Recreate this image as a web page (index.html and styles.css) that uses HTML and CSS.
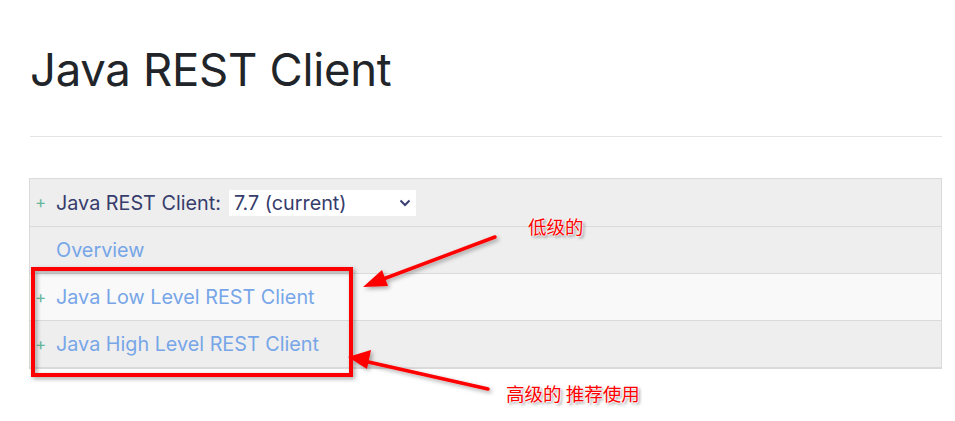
FILE: index.html
```html
<!DOCTYPE html>
<html lang="zh">
<head>
<meta charset="utf-8">
<title>Java REST Client</title>
<link rel="stylesheet" href="styles.css">
</head>
<body>
<main class="page">
  <h1 class="title">Java REST Client</h1>
  <hr class="rule">
  <div class="toc">
    <div class="row row-head">
      <span class="plus">+</span>
      <span class="label">Java REST Client:</span>
      <span class="select"><span class="select-text">7.7 (current)</span>
        <svg class="chev" width="12" height="8" viewBox="0 0 12 8"><path d="M1.5 1.5 L6 6 L10.5 1.5" fill="none" stroke="#3a4170" stroke-width="2"/></svg>
      </span>
    </div>
    <div class="row">
      <span class="plus hidden">+</span>
      <a class="link">Overview</a>
    </div>
    <div class="row row-light">
      <span class="plus">+</span>
      <a class="link">Java Low Level REST Client</a>
    </div>
    <div class="row">
      <span class="plus">+</span>
      <a class="link">Java High Level REST Client</a>
    </div>
  </div>
</main>
<svg class="annot" width="955" height="421" viewBox="0 0 955 421">
  <defs>
    <filter id="sh" x="-20%" y="-20%" width="140%" height="140%">
      <feDropShadow dx="2" dy="2" stdDeviation="2" flood-color="#000" flood-opacity="0.35"/>
    </filter>
  </defs>
  <g filter="url(#sh)">
    <rect x="33" y="269" width="318" height="106" fill="none" stroke="#ff0000" stroke-width="4"/>
    <line x1="495" y1="237" x2="378" y2="281" stroke="#ff0000" stroke-width="3.5" stroke-linecap="round"/>
    <polygon points="363,287 382,270 388,286" fill="#ff0000"/>
    <line x1="488" y1="389" x2="364" y2="361" stroke="#ff0000" stroke-width="3.5" stroke-linecap="round"/>
    <polygon points="348,357 371,350 367,369" fill="#ff0000"/>
  </g>
</svg>
<div class="note note-low">低级的</div>
<div class="note note-high">高级的 推荐使用</div>
</body>
</html>
```
FILE: styles.css
```css
html, body {
  margin: 0;
  padding: 0;
  background: #ffffff;
}
body {
  font-family: Inter, "Noto Sans", sans-serif;
  position: relative;
  width: 955px;
  height: 421px;
  overflow: hidden;
}
.page {
  padding: 0 13px 0 30px;
}
.title {
  margin: 0;
  padding-top: 42px;
  font-size: 45.5px;
  font-weight: 400;
  line-height: 56px;
  color: #212529;
  letter-spacing: -0.3px;
}
.rule {
  margin: 38px 0 0 0;
  border: 0;
  border-top: 1px solid #e4e4e4;
  width: 912px;
}
.toc {
  margin-top: 41px;
  width: 911px;
  border: 1px solid #dadada;
  border-bottom-width: 2px;
  background: #eeeeee;
  margin-left: -1px;
}
.row {
  display: flex;
  align-items: center;
  height: 46px;
  border-top: 1px solid #dadada;
  padding-left: 5px;
  font-size: 19.8px;
}
.row:first-child {
  border-top: 0;
  height: 47px;
}
.row-light {
  background: #f9f9f9;
}
.plus {
  width: 21px;
  color: #67b79c;
  font-size: 17px;
  line-height: 1;
}
.hidden {
  visibility: hidden;
}
.label {
  color: #363c6c;
}
.link {
  color: #77a6e8;
}
.select {
  margin-left: 8px;
  display: flex;
  align-items: center;
  justify-content: space-between;
  width: 182px;
  height: 26px;
  padding-left: 5px;
  background: #ffffff;
  color: #363c6c;
}
.chev {
  margin-right: 5px;
}
.annot {
  position: absolute;
  left: 0;
  top: 0;
}
.note {
  position: absolute;
  font-family: "Noto Sans CJK SC", sans-serif;
  font-size: 18.5px;
  line-height: 22px;
  color: #ff0000;
  text-shadow: 0 0 2px #fff, 0 0 2px #fff, 0 0 2px #fff, 2px 2px 3px rgba(0,0,0,0.45);
}
.note-low {
  left: 528px;
  top: 215px;
}
.note-high {
  left: 506px;
  top: 382px;
}
```
